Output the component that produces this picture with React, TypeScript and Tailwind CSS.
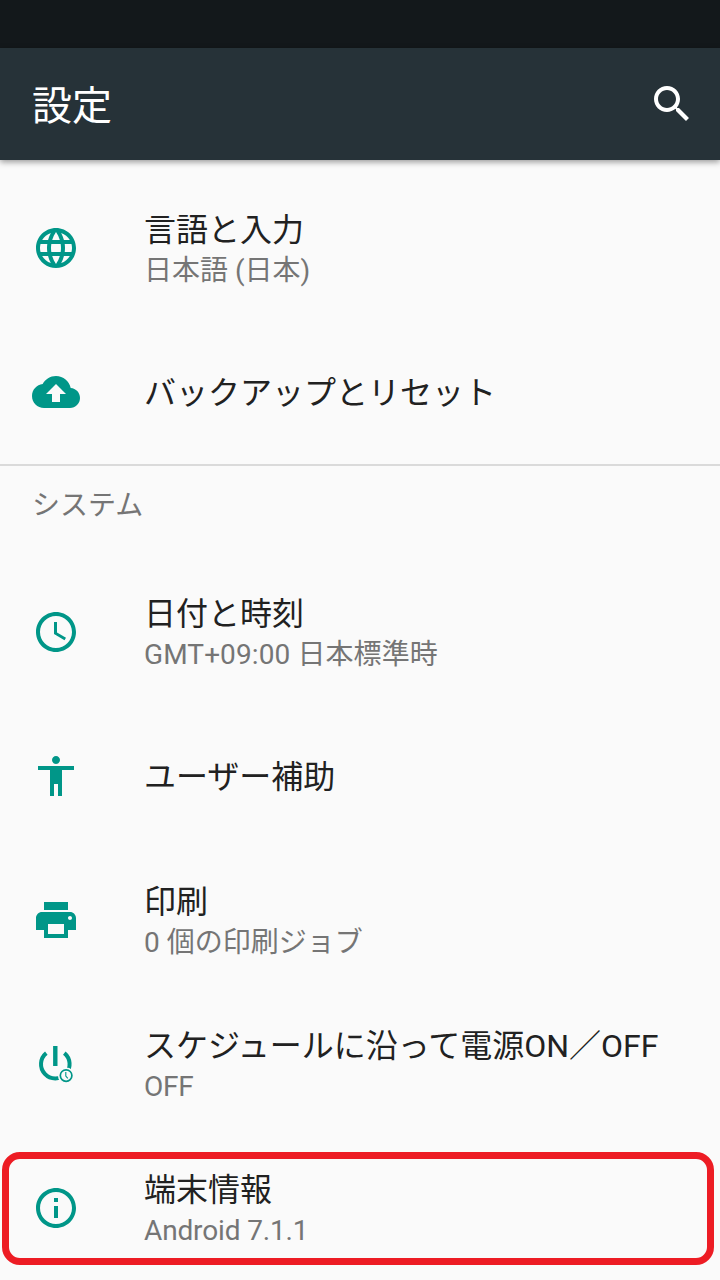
import type { ReactNode } from 'react';

const TEXT_FONT = "font-['Roboto','Noto_Sans_CJK_JP',sans-serif]";

function Icon({ d }: { d: string }) {
  return (
    <svg viewBox="0 0 24 24" className="size-12 shrink-0 fill-[#009688]">
      <path d={d} />
    </svg>
  );
}

function ScheduledPowerIcon() {
  return (
    <svg viewBox="0 0 48 48" className="size-12 shrink-0" fill="none" stroke="#009688">
      <path d="M14.3 13.1A14.3 14.3 0 1 0 32.3 13.1" strokeWidth="4" />
      <path d="M23.3 6v20" strokeWidth="4.4" />
      <circle cx="34.1" cy="35.6" r="8.2" fill="#fafafa" stroke="none" />
      <circle cx="34.1" cy="35.6" r="5.8" strokeWidth="1.7" />
      <path d="M33.8 32v4l2 2.4" strokeWidth="1.1" />
    </svg>
  );
}

interface RowProps {
  icon: ReactNode;
  title: string;
  summary?: string;
  tracking?: string;
}

function Row({ icon, title, summary, tracking = '' }: RowProps) {
  return (
    <li className="flex h-36 items-center gap-16 px-8">
      {icon}
      <div className="flex flex-col pt-0.5 whitespace-nowrap">
        <span className="text-[32px] leading-[42px] text-[#212121]">{title}</span>
        {summary && (
          <span className={`mt-0.5 text-[28px] leading-[36px] text-[#757575] ${tracking}`}>{summary}</span>
        )}
      </div>
    </li>
  );
}

const paths = {
  globe:
    'M11.99 2C6.47 2 2 6.48 2 12s4.47 10 9.99 10C17.52 22 22 17.52 22 12S17.52 2 11.99 2zm6.93 6h-2.95c-.32-1.25-.78-2.45-1.38-3.56 1.84.63 3.37 1.91 4.33 3.56zM12 4.04c.83 1.2 1.48 2.53 1.91 3.96h-3.82c.43-1.43 1.08-2.76 1.91-3.96zM4.26 14C4.1 13.36 4 12.69 4 12s.1-1.36.26-2h3.38c-.08.66-.14 1.32-.14 2s.06 1.34.14 2H4.26zm.82 2h2.95c.32 1.25.78 2.45 1.38 3.56-1.84-.63-3.37-1.9-4.33-3.56zm2.95-8H5.08c.96-1.66 2.49-2.93 4.33-3.56C8.81 5.55 8.35 6.75 8.03 8zM12 19.96c-.83-1.2-1.48-2.53-1.91-3.96h3.82c-.43 1.43-1.08 2.76-1.91 3.96zM14.34 14H9.66c-.09-.66-.16-1.32-.16-2s.07-1.35.16-2h4.68c.09.65.16 1.32.16 2s-.07 1.34-.16 2zm.25 5.56c.6-1.11 1.06-2.31 1.38-3.56h2.95c-.96 1.65-2.49 2.93-4.33 3.56zM16.36 14c.08-.66.14-1.32.14-2s-.06-1.34-.14-2h3.38c.16.64.26 1.31.26 2s-.1 1.36-.26 2h-3.38z',
  backup:
    'M19.35 10.04C18.67 6.59 15.64 4 12 4 9.11 4 6.6 5.64 5.35 8.04 2.34 8.36 0 10.91 0 14c0 3.31 2.69 6 6 6h13c2.76 0 5-2.24 5-5 0-2.64-2.05-4.78-4.65-4.96zM14 13v4h-4v-4H7l5-5 5 5h-3z',
  clock:
    'M11.99 2C6.47 2 2 6.48 2 12s4.47 10 9.99 10C17.52 22 22 17.52 22 12S17.52 2 11.99 2zM12 20c-4.42 0-8-3.58-8-8s3.58-8 8-8 8 3.58 8 8-3.58 8-8 8zM12.5 7H11v6l5.25 3.15.75-1.23-4.5-2.67z',
  person:
    'M12 2c1.1 0 2 .9 2 2s-.9 2-2 2-2-.9-2-2 .9-2 2-2zm9 7h-6v13h-2v-6h-2v6H9V9H3V7h18v2z',
  print:
    'M19 8H5c-1.66 0-3 1.34-3 3v6h4v4h12v-4h4v-6c0-1.66-1.34-3-3-3zm-3 11H8v-5h8v5zm3-7c-.55 0-1-.45-1-1s.45-1 1-1 1 .45 1 1-.45 1-1 1zm-1-9H6v4h12V3z',
  info: 'M11 17h2v-6h-2v6zm1-15C6.48 2 2 6.48 2 12s4.48 10 10 10 10-4.48 10-10S17.52 2 12 2zm0 18c-4.41 0-8-3.59-8-8s3.59-8 8-8 8 3.59 8 8-3.59 8-8 8zM11 9h2V7h-2v2z',
};

export default function App() {
  return (
    <div lang="ja" className={`relative flex h-[1280px] w-[720px] flex-col overflow-hidden bg-[#fafafa] ${TEXT_FONT}`}>
      <div className="h-12 shrink-0 bg-[#13181b]" />
      <header className="flex h-28 shrink-0 items-center justify-between bg-[#263238] pr-6 pl-8 shadow-[0_2px_6px_rgba(0,0,0,0.4)]">
        <h1 className="pt-1.5 text-[40px] leading-[56px] text-white">設定</h1>
        <svg viewBox="0 0 24 24" className="size-12 fill-white">
          <path d="M15.5 14h-.79l-.28-.27C15.41 12.59 16 11.11 16 9.5 16 5.91 13.09 3 9.5 3S3 5.91 3 9.5 5.91 16 9.5 16c1.61 0 3.09-.59 4.23-1.57l.27.28v.79l5 4.99L20.49 19l-4.99-5zm-6 0C7.01 14 5 11.99 5 9.5S7.01 5 9.5 5 14 7.01 14 9.5 11.99 14 9.5 14z" />
        </svg>
      </header>
      <main className="flex flex-col pt-4">
        <ul>
          <Row icon={<Icon d={paths.globe} />} title="言語と入力" summary="日本語 (日本)" />
          <Row icon={<Icon d={paths.backup} />} title="バックアップとリセット" />
        </ul>
        <section>
          <h2 className="h-24 border-t-2 border-[#dadada] px-8 pt-5 text-[28px] leading-[40px] text-[#757575]">システム</h2>
          <ul>
            <Row icon={<Icon d={paths.clock} />} title="日付と時刻" summary="GMT+09:00 日本標準時" tracking="tracking-[0.1px]" />
            <Row icon={<Icon d={paths.person} />} title="ユーザー補助" />
            <Row icon={<Icon d={paths.print} />} title="印刷" summary="0 個の印刷ジョブ" />
            <Row icon={<ScheduledPowerIcon />} title="スケジュールに沿って電源ON／OFF" summary="OFF" tracking="tracking-[-0.3px]" />
            <Row icon={<Icon d={paths.info} />} title="端末情報" summary="Android 7.1.1" tracking="tracking-[-0.14px]" />
          </ul>
        </section>
      </main>
      <div className="pointer-events-none absolute top-[1152px] left-[2px] h-[113px] w-[712px] rounded-[18px] border-[7px] border-[#ed1c24]" />
    </div>
  );
}
